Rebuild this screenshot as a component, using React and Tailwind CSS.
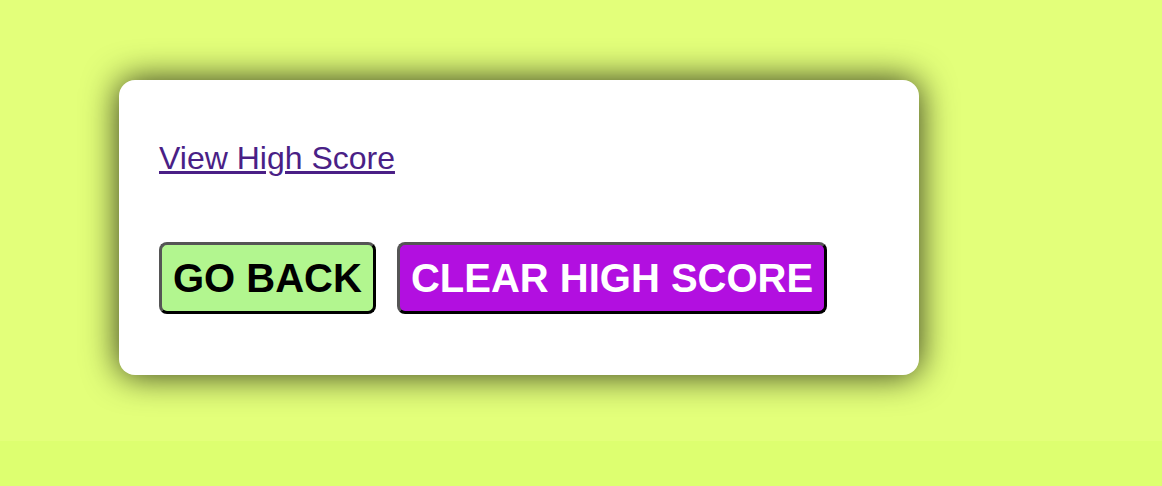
import React from 'react';

const App = () => {
    return (
        <div className="min-h-[486px] bg-[#ddff70] font-['Liberation_Sans',Arial,sans-serif]">
            <div className="h-[441px] bg-[#e3ff7a] pt-20 pl-[119px]">
                <div className="w-[800px] bg-white rounded-2xl shadow-[0_0_35px_rgba(0,0,0,0.8)] p-10">
                    <a href="#" className="block w-fit mt-5 text-[32px] leading-[37px] text-[#4a1f86] underline">
                        View High Score
                    </a>
                    <div className="flex gap-[21px] mt-[65px] mb-[21px]">
                        <button className="bg-[#b2f68f] text-black text-[40px] font-bold leading-[46px] px-[11px] py-[10px] rounded-lg border-[3px] border-t-[#555] border-l-[#555] border-b-black border-r-black">
                            GO BACK
                        </button>
                        <button className="bg-[#b20fe0] text-white text-[40px] font-bold leading-[46px] px-[11px] py-[10px] rounded-lg border-[3px] border-t-[#555] border-l-[#555] border-b-black border-r-black">
                            CLEAR HIGH SCORE
                        </button>
                    </div>
                </div>
            </div>
        </div>
    );
};

export default App;
